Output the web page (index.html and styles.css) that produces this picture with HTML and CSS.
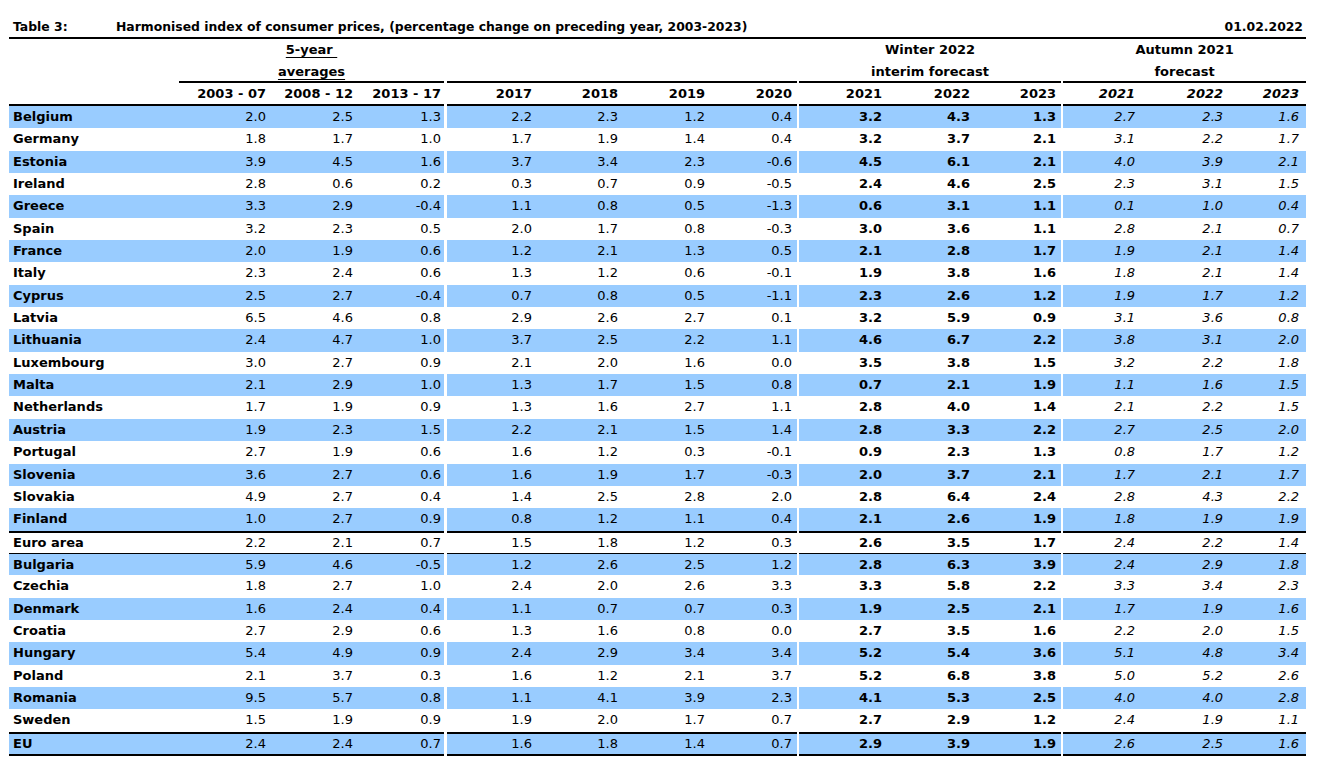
FILE: index.html
```html
<!DOCTYPE html>
<html lang="en">
<head>
<meta charset="utf-8">
<title>Table 3: Harmonised index of consumer prices</title>
<link rel="stylesheet" href="styles.css">
</head>
<body>
<div class="sheet">
  <div class="title">
    <span class="tnum">Table 3:</span>
    <span class="ttext">Harmonised index of consumer prices, (percentage change on preceding year, 2003-2023)</span>
    <span class="tdate">01.02.2022</span>
  </div>
  <table class="hicp">
    <colgroup>
      <col class="w-label">
      <col class="w90"><col class="w87"><col class="w88">
      <col class="w-gap3">
      <col class="w90"><col class="w86"><col class="w87"><col class="w87">
      <col class="w-gap2">
      <col class="w88"><col class="w88"><col class="w86">
      <col class="w-gap2">
      <col class="w79"><col class="w88"><col class="w76">
    </colgroup>
    <thead>
      <tr class="h1">
        <th></th>
        <th colspan="3" class="grp"><span class="ul">5-year&nbsp;</span></th>
        <th class="g"></th>
        <th colspan="4"></th>
        <th class="g"></th>
        <th colspan="3" class="grp">Winter 2022</th>
        <th class="g"></th>
        <th colspan="3" class="grp">Autumn 2021</th>
      </tr>
      <tr class="h2">
        <th></th>
        <th colspan="3" class="grp line"><span class="ul">averages</span></th>
        <th class="g"></th>
        <th colspan="4" class="line"></th>
        <th class="g"></th>
        <th colspan="3" class="grp line">interim forecast</th>
        <th class="g"></th>
        <th colspan="3" class="grp line">forecast</th>
      </tr>
      <tr class="h3">
        <th class="line"></th>
        <th class="c1 line">2003 - 07</th><th class="c1 line">2008 - 12</th><th class="c1 line">2013 - 17</th>
        <th class="g"></th>
        <th class="c2 line">2017</th><th class="c2 line">2018</th><th class="c2 line">2019</th><th class="c2 line">2020</th>
        <th class="g"></th>
        <th class="c3 line">2021</th><th class="c3 line">2022</th><th class="c3 line">2023</th>
        <th class="g"></th>
        <th class="c4 line">2021</th><th class="c4 line">2022</th><th class="c4 line">2023</th>
      </tr>
    </thead>
    <tbody>
      <tr class="b"><th>Belgium</th><td class="c1">2.0</td><td class="c1">2.5</td><td class="c1">1.3</td><td class="g"></td><td class="c2">2.2</td><td class="c2">2.3</td><td class="c2">1.2</td><td class="c2">0.4</td><td class="g"></td><td class="c3">3.2</td><td class="c3">4.3</td><td class="c3">1.3</td><td class="g"></td><td class="c4">2.7</td><td class="c4">2.3</td><td class="c4">1.6</td></tr>
      <tr><th>Germany</th><td class="c1">1.8</td><td class="c1">1.7</td><td class="c1">1.0</td><td class="g"></td><td class="c2">1.7</td><td class="c2">1.9</td><td class="c2">1.4</td><td class="c2">0.4</td><td class="g"></td><td class="c3">3.2</td><td class="c3">3.7</td><td class="c3">2.1</td><td class="g"></td><td class="c4">3.1</td><td class="c4">2.2</td><td class="c4">1.7</td></tr>
      <tr class="b"><th>Estonia</th><td class="c1">3.9</td><td class="c1">4.5</td><td class="c1">1.6</td><td class="g"></td><td class="c2">3.7</td><td class="c2">3.4</td><td class="c2">2.3</td><td class="c2">-0.6</td><td class="g"></td><td class="c3">4.5</td><td class="c3">6.1</td><td class="c3">2.1</td><td class="g"></td><td class="c4">4.0</td><td class="c4">3.9</td><td class="c4">2.1</td></tr>
      <tr><th>Ireland</th><td class="c1">2.8</td><td class="c1">0.6</td><td class="c1">0.2</td><td class="g"></td><td class="c2">0.3</td><td class="c2">0.7</td><td class="c2">0.9</td><td class="c2">-0.5</td><td class="g"></td><td class="c3">2.4</td><td class="c3">4.6</td><td class="c3">2.5</td><td class="g"></td><td class="c4">2.3</td><td class="c4">3.1</td><td class="c4">1.5</td></tr>
      <tr class="b"><th>Greece</th><td class="c1">3.3</td><td class="c1">2.9</td><td class="c1">-0.4</td><td class="g"></td><td class="c2">1.1</td><td class="c2">0.8</td><td class="c2">0.5</td><td class="c2">-1.3</td><td class="g"></td><td class="c3">0.6</td><td class="c3">3.1</td><td class="c3">1.1</td><td class="g"></td><td class="c4">0.1</td><td class="c4">1.0</td><td class="c4">0.4</td></tr>
      <tr><th>Spain</th><td class="c1">3.2</td><td class="c1">2.3</td><td class="c1">0.5</td><td class="g"></td><td class="c2">2.0</td><td class="c2">1.7</td><td class="c2">0.8</td><td class="c2">-0.3</td><td class="g"></td><td class="c3">3.0</td><td class="c3">3.6</td><td class="c3">1.1</td><td class="g"></td><td class="c4">2.8</td><td class="c4">2.1</td><td class="c4">0.7</td></tr>
      <tr class="b"><th>France</th><td class="c1">2.0</td><td class="c1">1.9</td><td class="c1">0.6</td><td class="g"></td><td class="c2">1.2</td><td class="c2">2.1</td><td class="c2">1.3</td><td class="c2">0.5</td><td class="g"></td><td class="c3">2.1</td><td class="c3">2.8</td><td class="c3">1.7</td><td class="g"></td><td class="c4">1.9</td><td class="c4">2.1</td><td class="c4">1.4</td></tr>
      <tr><th>Italy</th><td class="c1">2.3</td><td class="c1">2.4</td><td class="c1">0.6</td><td class="g"></td><td class="c2">1.3</td><td class="c2">1.2</td><td class="c2">0.6</td><td class="c2">-0.1</td><td class="g"></td><td class="c3">1.9</td><td class="c3">3.8</td><td class="c3">1.6</td><td class="g"></td><td class="c4">1.8</td><td class="c4">2.1</td><td class="c4">1.4</td></tr>
      <tr class="b"><th>Cyprus</th><td class="c1">2.5</td><td class="c1">2.7</td><td class="c1">-0.4</td><td class="g"></td><td class="c2">0.7</td><td class="c2">0.8</td><td class="c2">0.5</td><td class="c2">-1.1</td><td class="g"></td><td class="c3">2.3</td><td class="c3">2.6</td><td class="c3">1.2</td><td class="g"></td><td class="c4">1.9</td><td class="c4">1.7</td><td class="c4">1.2</td></tr>
      <tr><th>Latvia</th><td class="c1">6.5</td><td class="c1">4.6</td><td class="c1">0.8</td><td class="g"></td><td class="c2">2.9</td><td class="c2">2.6</td><td class="c2">2.7</td><td class="c2">0.1</td><td class="g"></td><td class="c3">3.2</td><td class="c3">5.9</td><td class="c3">0.9</td><td class="g"></td><td class="c4">3.1</td><td class="c4">3.6</td><td class="c4">0.8</td></tr>
      <tr class="b"><th>Lithuania</th><td class="c1">2.4</td><td class="c1">4.7</td><td class="c1">1.0</td><td class="g"></td><td class="c2">3.7</td><td class="c2">2.5</td><td class="c2">2.2</td><td class="c2">1.1</td><td class="g"></td><td class="c3">4.6</td><td class="c3">6.7</td><td class="c3">2.2</td><td class="g"></td><td class="c4">3.8</td><td class="c4">3.1</td><td class="c4">2.0</td></tr>
      <tr><th>Luxembourg</th><td class="c1">3.0</td><td class="c1">2.7</td><td class="c1">0.9</td><td class="g"></td><td class="c2">2.1</td><td class="c2">2.0</td><td class="c2">1.6</td><td class="c2">0.0</td><td class="g"></td><td class="c3">3.5</td><td class="c3">3.8</td><td class="c3">1.5</td><td class="g"></td><td class="c4">3.2</td><td class="c4">2.2</td><td class="c4">1.8</td></tr>
      <tr class="b"><th>Malta</th><td class="c1">2.1</td><td class="c1">2.9</td><td class="c1">1.0</td><td class="g"></td><td class="c2">1.3</td><td class="c2">1.7</td><td class="c2">1.5</td><td class="c2">0.8</td><td class="g"></td><td class="c3">0.7</td><td class="c3">2.1</td><td class="c3">1.9</td><td class="g"></td><td class="c4">1.1</td><td class="c4">1.6</td><td class="c4">1.5</td></tr>
      <tr><th>Netherlands</th><td class="c1">1.7</td><td class="c1">1.9</td><td class="c1">0.9</td><td class="g"></td><td class="c2">1.3</td><td class="c2">1.6</td><td class="c2">2.7</td><td class="c2">1.1</td><td class="g"></td><td class="c3">2.8</td><td class="c3">4.0</td><td class="c3">1.4</td><td class="g"></td><td class="c4">2.1</td><td class="c4">2.2</td><td class="c4">1.5</td></tr>
      <tr class="b"><th>Austria</th><td class="c1">1.9</td><td class="c1">2.3</td><td class="c1">1.5</td><td class="g"></td><td class="c2">2.2</td><td class="c2">2.1</td><td class="c2">1.5</td><td class="c2">1.4</td><td class="g"></td><td class="c3">2.8</td><td class="c3">3.3</td><td class="c3">2.2</td><td class="g"></td><td class="c4">2.7</td><td class="c4">2.5</td><td class="c4">2.0</td></tr>
      <tr><th>Portugal</th><td class="c1">2.7</td><td class="c1">1.9</td><td class="c1">0.6</td><td class="g"></td><td class="c2">1.6</td><td class="c2">1.2</td><td class="c2">0.3</td><td class="c2">-0.1</td><td class="g"></td><td class="c3">0.9</td><td class="c3">2.3</td><td class="c3">1.3</td><td class="g"></td><td class="c4">0.8</td><td class="c4">1.7</td><td class="c4">1.2</td></tr>
      <tr class="b"><th>Slovenia</th><td class="c1">3.6</td><td class="c1">2.7</td><td class="c1">0.6</td><td class="g"></td><td class="c2">1.6</td><td class="c2">1.9</td><td class="c2">1.7</td><td class="c2">-0.3</td><td class="g"></td><td class="c3">2.0</td><td class="c3">3.7</td><td class="c3">2.1</td><td class="g"></td><td class="c4">1.7</td><td class="c4">2.1</td><td class="c4">1.7</td></tr>
      <tr><th>Slovakia</th><td class="c1">4.9</td><td class="c1">2.7</td><td class="c1">0.4</td><td class="g"></td><td class="c2">1.4</td><td class="c2">2.5</td><td class="c2">2.8</td><td class="c2">2.0</td><td class="g"></td><td class="c3">2.8</td><td class="c3">6.4</td><td class="c3">2.4</td><td class="g"></td><td class="c4">2.8</td><td class="c4">4.3</td><td class="c4">2.2</td></tr>
      <tr class="b"><th>Finland</th><td class="c1">1.0</td><td class="c1">2.7</td><td class="c1">0.9</td><td class="g"></td><td class="c2">0.8</td><td class="c2">1.2</td><td class="c2">1.1</td><td class="c2">0.4</td><td class="g"></td><td class="c3">2.1</td><td class="c3">2.6</td><td class="c3">1.9</td><td class="g"></td><td class="c4">1.8</td><td class="c4">1.9</td><td class="c4">1.9</td></tr>
      <tr class="top-thick"><th>Euro area</th><td class="c1">2.2</td><td class="c1">2.1</td><td class="c1">0.7</td><td class="g"></td><td class="c2">1.5</td><td class="c2">1.8</td><td class="c2">1.2</td><td class="c2">0.3</td><td class="g"></td><td class="c3">2.6</td><td class="c3">3.5</td><td class="c3">1.7</td><td class="g"></td><td class="c4">2.4</td><td class="c4">2.2</td><td class="c4">1.4</td></tr>
      <tr class="b top-thin"><th>Bulgaria</th><td class="c1">5.9</td><td class="c1">4.6</td><td class="c1">-0.5</td><td class="g"></td><td class="c2">1.2</td><td class="c2">2.6</td><td class="c2">2.5</td><td class="c2">1.2</td><td class="g"></td><td class="c3">2.8</td><td class="c3">6.3</td><td class="c3">3.9</td><td class="g"></td><td class="c4">2.4</td><td class="c4">2.9</td><td class="c4">1.8</td></tr>
      <tr><th>Czechia</th><td class="c1">1.8</td><td class="c1">2.7</td><td class="c1">1.0</td><td class="g"></td><td class="c2">2.4</td><td class="c2">2.0</td><td class="c2">2.6</td><td class="c2">3.3</td><td class="g"></td><td class="c3">3.3</td><td class="c3">5.8</td><td class="c3">2.2</td><td class="g"></td><td class="c4">3.3</td><td class="c4">3.4</td><td class="c4">2.3</td></tr>
      <tr class="b"><th>Denmark</th><td class="c1">1.6</td><td class="c1">2.4</td><td class="c1">0.4</td><td class="g"></td><td class="c2">1.1</td><td class="c2">0.7</td><td class="c2">0.7</td><td class="c2">0.3</td><td class="g"></td><td class="c3">1.9</td><td class="c3">2.5</td><td class="c3">2.1</td><td class="g"></td><td class="c4">1.7</td><td class="c4">1.9</td><td class="c4">1.6</td></tr>
      <tr><th>Croatia</th><td class="c1">2.7</td><td class="c1">2.9</td><td class="c1">0.6</td><td class="g"></td><td class="c2">1.3</td><td class="c2">1.6</td><td class="c2">0.8</td><td class="c2">0.0</td><td class="g"></td><td class="c3">2.7</td><td class="c3">3.5</td><td class="c3">1.6</td><td class="g"></td><td class="c4">2.2</td><td class="c4">2.0</td><td class="c4">1.5</td></tr>
      <tr class="b"><th>Hungary</th><td class="c1">5.4</td><td class="c1">4.9</td><td class="c1">0.9</td><td class="g"></td><td class="c2">2.4</td><td class="c2">2.9</td><td class="c2">3.4</td><td class="c2">3.4</td><td class="g"></td><td class="c3">5.2</td><td class="c3">5.4</td><td class="c3">3.6</td><td class="g"></td><td class="c4">5.1</td><td class="c4">4.8</td><td class="c4">3.4</td></tr>
      <tr><th>Poland</th><td class="c1">2.1</td><td class="c1">3.7</td><td class="c1">0.3</td><td class="g"></td><td class="c2">1.6</td><td class="c2">1.2</td><td class="c2">2.1</td><td class="c2">3.7</td><td class="g"></td><td class="c3">5.2</td><td class="c3">6.8</td><td class="c3">3.8</td><td class="g"></td><td class="c4">5.0</td><td class="c4">5.2</td><td class="c4">2.6</td></tr>
      <tr class="b"><th>Romania</th><td class="c1">9.5</td><td class="c1">5.7</td><td class="c1">0.8</td><td class="g"></td><td class="c2">1.1</td><td class="c2">4.1</td><td class="c2">3.9</td><td class="c2">2.3</td><td class="g"></td><td class="c3">4.1</td><td class="c3">5.3</td><td class="c3">2.5</td><td class="g"></td><td class="c4">4.0</td><td class="c4">4.0</td><td class="c4">2.8</td></tr>
      <tr><th>Sweden</th><td class="c1">1.5</td><td class="c1">1.9</td><td class="c1">0.9</td><td class="g"></td><td class="c2">1.9</td><td class="c2">2.0</td><td class="c2">1.7</td><td class="c2">0.7</td><td class="g"></td><td class="c3">2.7</td><td class="c3">2.9</td><td class="c3">1.2</td><td class="g"></td><td class="c4">2.4</td><td class="c4">1.9</td><td class="c4">1.1</td></tr>
      <tr class="b top-thick bottom-thick"><th>EU</th><td class="c1">2.4</td><td class="c1">2.4</td><td class="c1">0.7</td><td class="g"></td><td class="c2">1.6</td><td class="c2">1.8</td><td class="c2">1.4</td><td class="c2">0.7</td><td class="g"></td><td class="c3">2.9</td><td class="c3">3.9</td><td class="c3">1.9</td><td class="g"></td><td class="c4">2.6</td><td class="c4">2.5</td><td class="c4">1.6</td></tr>
    </tbody>
  </table>
</div>
</body>
</html>
```

FILE: styles.css
```css
html, body {
  margin: 0;
  padding: 0;
  background: #ffffff;
}

body {
  font-family: "DejaVu Sans", "Verdana", sans-serif;
  color: #000000;
}

.sheet {
  padding-left: 9px;
  width: 1297px;
}

/* ---------- title line ---------- */
.title {
  display: flex;
  align-items: flex-end;
  box-sizing: border-box;
  height: 39px;
  border-bottom: 2px solid #000;
  font-size: 12.4px;
  font-weight: bold;
  line-height: 14px;
  padding-bottom: 3px;
}

.tnum {
  width: 103px;
  padding-left: 4px;
}

.ttext {
  flex: 1;
}

.tdate {
  padding-right: 3px;
}

/* ---------- table ---------- */
.hicp {
  border-collapse: separate;
  border-spacing: 0;
  table-layout: fixed;
  width: 1297px;
}

.w-label { width: 170px; }
.w-gap3 { width: 3px; }
.w-gap2 { width: 2px; }
.w76 { width: 76px; }
.w79 { width: 79px; }
.w86 { width: 86px; }
.w87 { width: 87px; }
.w88 { width: 88px; }
.w90 { width: 90px; }

.hicp th,
.hicp td {
  box-sizing: border-box;
  padding: 0;
  font-size: 13px;
  white-space: nowrap;
  overflow: visible;
}

/* header rows */
.hicp thead th {
  font-weight: bold;
  height: 22px;
  line-height: 22px;
  vertical-align: middle;
}

.hicp thead tr.h2 th { height: 22px; line-height: 19px; }
.hicp thead tr.h3 th { height: 23px; line-height: 21px; text-align: right; }

.hicp th.grp { text-align: center; }
.hicp th.line { border-bottom: 2px solid #000; }
.hicp th.g,
.hicp td.g { border: none !important; background: #fff !important; }

.ul {
  text-decoration: underline;
  text-underline-offset: 3px;
  text-decoration-thickness: 1px;
}

/* body rows */
.hicp tbody th,
.hicp tbody td {
  height: 22.34px;
  line-height: 22.34px;
}

.hicp tbody th {
  text-align: left;
  font-weight: bold;
  padding-left: 4px;
}

.hicp tbody td { text-align: right; }

.hicp tr.b th,
.hicp tr.b td { background: #99ccff; }

.c1 { padding-right: 3px !important; }
.c2 { padding-right: 5px !important; }
.c3 { padding-right: 5px !important; }
.c4 { padding-right: 7px !important; font-style: italic; }

.hicp tbody td.c3 { font-weight: bold; }

.hicp thead th.c4 { font-style: italic; }

.hicp tr.top-thick th,
.hicp tr.top-thick td { border-top: 2px solid #000; line-height: 20.34px; }

.hicp tr.top-thin th,
.hicp tr.top-thin td { border-top: 1px solid #000; line-height: 21.34px; }

.hicp tr.bottom-thick th,
.hicp tr.bottom-thick td {
  border-bottom: 2px solid #000;
  height: 24.34px;
}
```
